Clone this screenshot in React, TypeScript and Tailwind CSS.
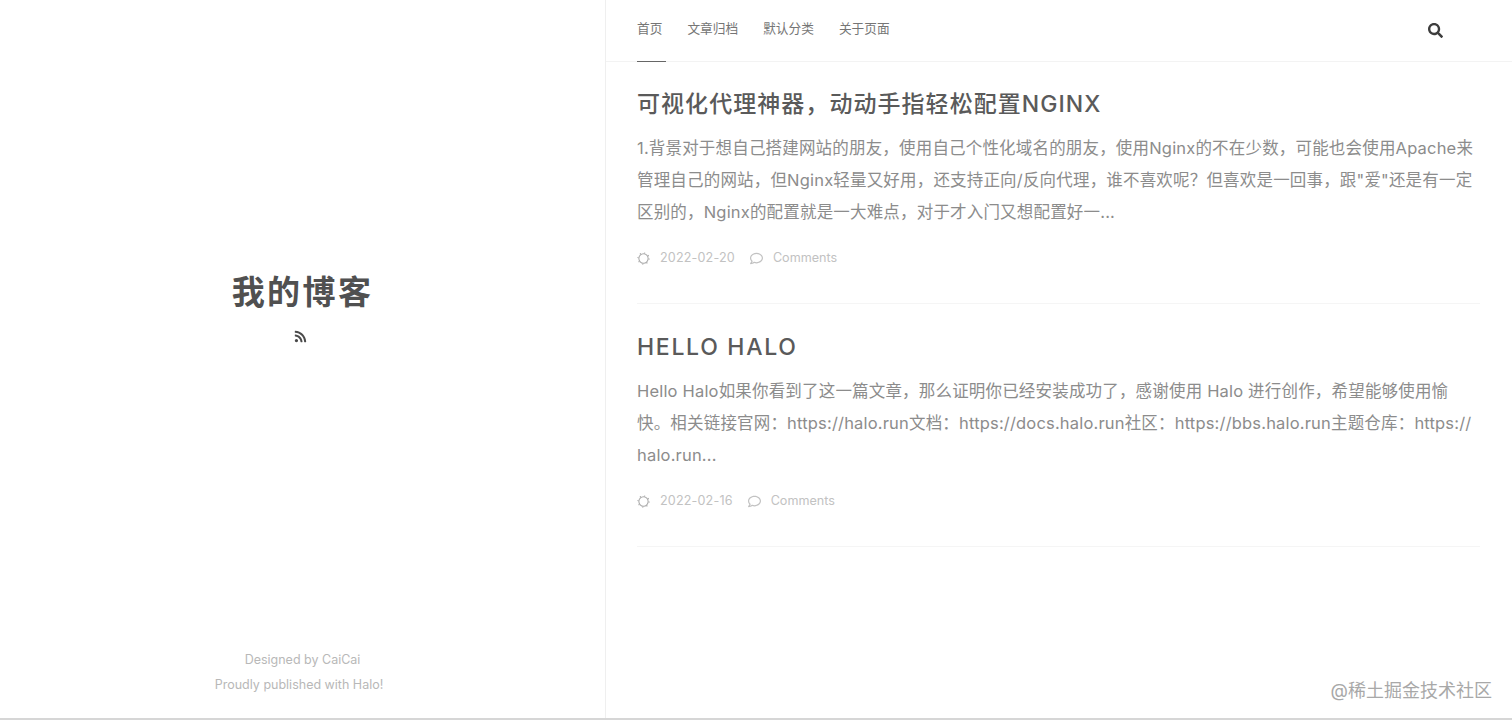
import { FaRss, FaSearch, FaRegComment } from 'react-icons/fa';

const FONT = 'font-[Inter,"Noto_Sans_CJK_SC",sans-serif]';

const navItems = ['首页', '文章归档', '默认分类', '关于页面'];

const posts = [
  {
    title: '可视化代理神器，动动手指轻松配置NGINX',
    titleClass: 'tracking-[1.05px]',
    excerpt:
      '1.背景对于想自己搭建网站的朋友，使用自己个性化域名的朋友，使用Nginx的不在少数，可能也会使用Apache来管理自己的网站，但Nginx轻量又好用，还支持正向/反向代理，谁不喜欢呢？但喜欢是一回事，跟"爱"还是有一定区别的，Nginx的配置就是一大难点，对于才入门又想配置好一...',
    date: '2022-02-20',
  },
  {
    title: 'HELLO HALO',
    titleClass: 'tracking-[1.7px]',
    excerpt:
      'Hello Halo如果你看到了这一篇文章，那么证明你已经安装成功了，感谢使用 Halo 进行创作，希望能够使用愉快。相关链接官网：https://halo.run文档：https://docs.halo.run社区：https://bbs.halo.run主题仓库：https://\u200bhalo.run...',
    date: '2022-02-16',
  },
];

const DateIcon = () => (
  <svg viewBox="0 0 14 14" className="h-[13px] w-[13px]" fill="none" stroke="#a8a8a8">
    <circle cx="7" cy="7" r="5" strokeWidth="1.1" />
    <circle cx="7" cy="7" r="6" strokeWidth="1.2" strokeDasharray="1.2 3.5" />
  </svg>
);

const PostCard = ({
  title,
  titleClass,
  excerpt,
  date,
}: {
  title: string;
  titleClass: string;
  excerpt: string;
  date: string;
}) => (
  <article className="h-[243px] border-b border-[#f5f5f5] pt-[26px]">
    <h2 className={`text-[23px] leading-[34px] font-medium text-[#5a5a5a] ${titleClass}`}>{title}</h2>
    <p className="mt-[11px] text-[16.5px] leading-[32px] tracking-[0.18px] text-[#8c8c8c]">{excerpt}</p>
    <div className="mt-[20px] flex items-center text-[12.6px] leading-[20px] text-[#c2c2c2]">
      <DateIcon />
      <span className="ml-[10px] tracking-[0.15px]">{date}</span>
      <FaRegComment className="ml-[15px] h-[13px] w-[13px]" />
      <span className="ml-[10px]">Comments</span>
    </div>
  </article>
);

export default function App() {
  return (
    <div className={`relative flex h-[720px] overflow-hidden border-b-2 border-[#d6d6d6] bg-white ${FONT}`}>
      {/* left cover panel */}
      <aside className="flex w-[606px] shrink-0 flex-col items-center border-r border-[#efefef]">
        <div className="mt-[268px] flex flex-col items-center">
          <h1 className="text-[33px] leading-[48px] font-bold tracking-[2.4px] text-[#505050]">我的博客</h1>
          <FaRss className="mt-[14px] mr-[3px] h-[13px] w-[13px] text-[#4a4a4a]" />
        </div>
        <footer className="mt-auto mb-[21px] text-center text-[12.5px] leading-[25px] text-[#b8b8b8]">
          <p>Designed by CaiCai</p>
          <p className="pr-[7px]">Proudly published with Halo!</p>
        </footer>
      </aside>

      <main className="min-w-0 flex-1">
        <header className="flex h-[62px] items-stretch justify-between border-b border-[#f3f3f3] pr-[69px] pl-[31px]">
          <nav className="flex gap-[25px]">
            {navItems.map((item, i) => (
              <a
                key={item}
                className={`-mb-px flex items-center border-b pb-[3px] text-[12.7px] text-[#757575] ${
                  i === 0 ? '-mr-[4px] border-[#666] pr-[4px]' : 'border-transparent'
                }`}
              >
                {item}
              </a>
            ))}
          </nav>
          <div className="flex items-center">
            <FaSearch className="h-[15px] w-[15px] text-[#3d3d3d]" />
          </div>
        </header>

        <div className="-mt-px pr-[32px] pl-[31px]">
          {posts.map((post) => (
            <PostCard key={post.date} {...post} />
          ))}
        </div>
      </main>

      {/* juejin watermark */}
      <div className="absolute right-[20px] bottom-[14px] text-[18px] leading-[26px] text-[#a8a8a8]">@稀土掘金技术社区</div>
    </div>
  );
}
